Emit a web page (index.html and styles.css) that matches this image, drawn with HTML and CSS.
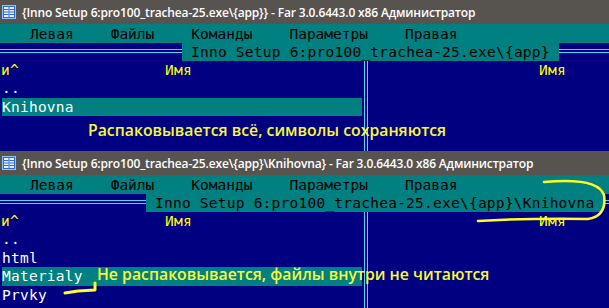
FILE: index.html
```html
<!DOCTYPE html>
<html lang="ru">

<head>
    <meta charset="UTF-8">
    <meta name="viewport" content="width=device-width, initial-scale=1.0">
    <title>Far Manager</title>
    <link rel="stylesheet" href="styles.css">
</head>

<body>
    <section class="win win-top">
        <div class="titlebar">
            <svg class="appicon" width="14" height="14" viewBox="0 0 14 14">
                <rect x="0" y="0" width="14" height="14" fill="#2a6bd8" />
                <rect x="0.5" y="0.5" width="13" height="13" fill="none" stroke="#8fc0ff" />
                <rect x="2" y="2" width="4.5" height="10" fill="#e8f2ff" />
                <rect x="7.5" y="2" width="4.5" height="10" fill="#e8f2ff" />
                <path d="M2 4.5h4.5M2 7h4.5M2 9.5h4.5M7.5 4.5h4.5M7.5 7h4.5M7.5 9.5h4.5" stroke="#2a6bd8" stroke-width="1" />
            </svg>
            <span class="title">{Inno Setup 6:pro100_trachea-25.exe\{app}} - Far 3.0.6443.0 x86 Администратор</span>
        </div>
        <div class="menubar">
            <span>Левая</span>
            <span>Файлы</span>
            <span>Команды</span>
            <span>Параметры</span>
            <span>Правая</span>
        </div>
        <div class="pathrow">
            <div class="dbl dbl-left1"></div>
            <div class="path"> Inno Setup 6:pro100_trachea-25.exe\{app} </div>
            <div class="dbl"></div>
        </div>
        <div class="cols">
            <div class="panel panel-left">
                <div class="row head"><span>и^</span><span class="name-h">Имя</span></div>
                <div class="row">..</div>
                <div class="row sel">Knihovna</div>
            </div>
            <div class="vsep"></div>
            <div class="panel panel-right">
                <div class="row head"><span class="name-h2">Имя</span></div>
            </div>
            <p class="note note1">Распаковывается всё, символы сохраняются</p>
        </div>
    </section>

    <section class="win win-bottom">
        <div class="titlebar">
            <svg class="appicon" width="14" height="14" viewBox="0 0 14 14">
                <rect x="0" y="0" width="14" height="14" fill="#2a6bd8" />
                <rect x="0.5" y="0.5" width="13" height="13" fill="none" stroke="#8fc0ff" />
                <rect x="2" y="2" width="4.5" height="10" fill="#e8f2ff" />
                <rect x="7.5" y="2" width="4.5" height="10" fill="#e8f2ff" />
                <path d="M2 4.5h4.5M2 7h4.5M2 9.5h4.5M7.5 4.5h4.5M7.5 7h4.5M7.5 9.5h4.5" stroke="#2a6bd8" stroke-width="1" />
            </svg>
            <span class="title">{Inno Setup 6:pro100_trachea-25.exe\{app}\Knihovna} - Far 3.0.6443.0 x86 Администратор</span>
        </div>
        <div class="menubar">
            <span>Левая</span>
            <span>Файлы</span>
            <span>Команды</span>
            <span>Параметры</span>
            <span>Правая</span>
        </div>
        <div class="pathrow">
            <div class="dbl dbl-left2"></div>
            <div class="path"> Inno Setup 6:pro100_trachea-25.exe\{app}\Knihovna </div>
            <div class="dbl"></div>
        </div>
        <div class="cols">
            <div class="panel panel-left">
                <div class="row head"><span>и^</span><span class="name-h">Имя</span></div>
                <div class="row">..</div>
                <div class="row">html</div>
                <div class="row sel">Materialy</div>
                <div class="row">Prvky</div>
            </div>
            <div class="vsep"></div>
            <div class="panel panel-right">
                <div class="row head"><span class="name-h2">Имя</span></div>
            </div>
            <p class="note note2">Не распаковывается, файлы внутри не читаются</p>
        </div>
        <svg class="marks" width="609" height="157" viewBox="0 151 609 157">
            <path d="M544 182 Q598 177 604 195 Q607 216 588 219 Q530 218 478 221" fill="none" stroke="#ffff22" stroke-width="2.5" stroke-linecap="round" />
            <path d="M65 293 L78 291 L95 290 L95 283" fill="none" stroke="#ffff22" stroke-width="3" stroke-linecap="round" stroke-linejoin="round" />
        </svg>
    </section>
</body>

</html>
```

FILE: styles.css
```css
body {
    margin: 0;
    background-color: #000080;
    font-family: "DejaVu Sans Mono", monospace;
    font-size: 14.5px;
    overflow: hidden;
}

.win {
    position: relative;
    display: flex;
    flex-direction: column;
    background-color: #000080;
}

.win-top {
    height: 151px;
}

.win-bottom {
    height: 157px;
}

.titlebar {
    height: 24px;
    flex: none;
    display: flex;
    align-items: center;
    background-color: #57534f;
    color: #ffffff;
    font-family: "Open Sans", sans-serif;
    font-weight: 600;
    font-size: 12px;
    letter-spacing: -0.15px;
}

.appicon {
    margin: 0 6px 0 2px;
}

.title {
    white-space: pre;
}

.menubar {
    height: 19px;
    flex: none;
    display: flex;
    align-items: center;
    gap: 37px;
    padding-left: 30px;
    background-color: #008080;
    color: #000000;
}

.pathrow {
    height: 18px;
    flex: none;
    display: flex;
}

.dbl {
    flex: 1;
    height: 2px;
    margin-top: 6px;
    border-top: 1px solid #55d4ff;
    border-bottom: 1px solid #55d4ff;
}

.dbl-left1 {
    flex: none;
    width: 182px;
}

.dbl-left2 {
    flex: none;
    width: 146px;
}

.path {
    background-color: #008080;
    color: #000000;
    line-height: 18px;
    letter-spacing: 0.24px;
    white-space: pre;
}

.cols {
    flex: 1;
    display: flex;
    position: relative;
}

.panel-left {
    width: 364px;
}

.panel-right {
    flex: 1;
}

.vsep {
    width: 2px;
    border-left: 1px solid #55d4ff;
    border-right: 1px solid #55d4ff;
}

.row {
    height: 18.5px;
    line-height: 18.5px;
    margin: 0 2px;
    color: #ffffff;
    letter-spacing: 0.24px;
    white-space: pre;
}

.row.head {
    height: 18px;
    line-height: 18px;
    margin-left: 1px;
    color: #ffff00;
    display: flex;
}

.name-h {
    margin-left: 146px;
}

.name-h2 {
    margin-left: 170px;
}

.sel {
    background-color: #008080;
}

.note {
    position: absolute;
    margin: 0;
    color: #f8f83c;
    font-family: "Open Sans", sans-serif;
    font-weight: 600;
    font-size: 15.8px;
    white-space: pre;
}

.note1 {
    left: 88px;
    top: 58px;
}

.note2 {
    left: 97px;
    top: 51px;
}

.marks {
    position: absolute;
    left: 0;
    top: 0;
    pointer-events: none;
}
```
